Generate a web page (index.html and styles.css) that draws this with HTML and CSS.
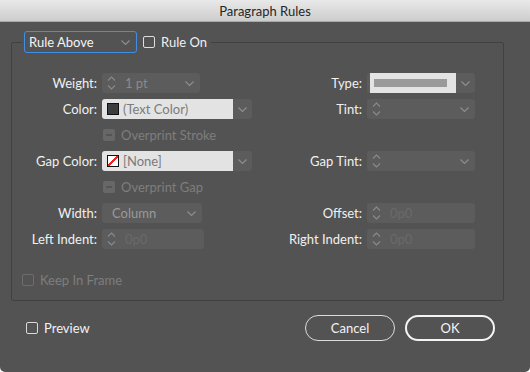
FILE: index.html
```html
<!DOCTYPE html>
<html lang="en">
<head>
  <meta charset="UTF-8">
  <title>Paragraph Rules</title>
  <link rel="stylesheet" href="styles.css">
</head>
<body>
<div class="window">
  <div class="titlebar">Paragraph Rules</div>

  <fieldset class="group">
    <legend class="legend">
      <div class="select focus">
        <span>Rule Above</span>
        <svg class="chev" width="9" height="5" viewBox="0 0 9 5"><path d="M0.5 0.5 L4.5 4.5 L8.5 0.5"/></svg>
      </div>
      <span class="check"></span>
      <span class="label-on">Rule On</span>
    </legend>

    <div class="grid">
      <!-- row 1 -->
      <label class="lbl">Weight:</label>
      <div class="field w98">
        <svg class="spin" width="9" height="16" viewBox="0 0 9 16"><path d="M1 5.5 L4.5 2 L8 5.5 M1 10.5 L4.5 14 L8 10.5"/></svg>
        <span class="val">1 pt</span>
        <svg class="chev" width="9" height="5" viewBox="0 0 9 5"><path d="M0.5 0.5 L4.5 4.5 L8.5 0.5"/></svg>
      </div>
      <label class="lbl">Type:</label>
      <div class="field w108 split">
        <div class="light type"><span class="stroke"></span></div>
        <svg class="chev" width="9" height="5" viewBox="0 0 9 5"><path d="M0.5 0.5 L4.5 4.5 L8.5 0.5"/></svg>
      </div>

      <!-- row 2 -->
      <label class="lbl">Color:</label>
      <div class="field w150 split">
        <div class="light"><span class="swatch dark"></span><span class="val">(Text Color)</span></div>
        <svg class="chev" width="9" height="5" viewBox="0 0 9 5"><path d="M0.5 0.5 L4.5 4.5 L8.5 0.5"/></svg>
      </div>
      <label class="lbl">Tint:</label>
      <div class="field w108">
        <svg class="spin" width="9" height="16" viewBox="0 0 9 16"><path d="M1 5.5 L4.5 2 L8 5.5 M1 10.5 L4.5 14 L8 10.5"/></svg>
        <span class="val"></span>
        <svg class="chev" width="9" height="5" viewBox="0 0 9 5"><path d="M0.5 0.5 L4.5 4.5 L8.5 0.5"/></svg>
      </div>

      <!-- row 3 -->
      <span></span>
      <div class="opt"><span class="check mixed"></span><span>Overprint Stroke</span></div>
      <span></span><span></span>

      <!-- row 4 -->
      <label class="lbl">Gap Color:</label>
      <div class="field w150 split">
        <div class="light"><span class="swatch none"></span><span class="val">[None]</span></div>
        <svg class="chev" width="9" height="5" viewBox="0 0 9 5"><path d="M0.5 0.5 L4.5 4.5 L8.5 0.5"/></svg>
      </div>
      <label class="lbl">Gap Tint:</label>
      <div class="field w108">
        <svg class="spin" width="9" height="16" viewBox="0 0 9 16"><path d="M1 5.5 L4.5 2 L8 5.5 M1 10.5 L4.5 14 L8 10.5"/></svg>
        <span class="val"></span>
        <svg class="chev" width="9" height="5" viewBox="0 0 9 5"><path d="M0.5 0.5 L4.5 4.5 L8.5 0.5"/></svg>
      </div>

      <!-- row 5 -->
      <span></span>
      <div class="opt"><span class="check mixed"></span><span>Overprint Gap</span></div>
      <span></span><span></span>

      <!-- row 6 -->
      <label class="lbl">Width:</label>
      <div class="field w100">
        <span class="val plain">Column</span>
        <svg class="chev" width="9" height="5" viewBox="0 0 9 5"><path d="M0.5 0.5 L4.5 4.5 L8.5 0.5"/></svg>
      </div>
      <label class="lbl">Offset:</label>
      <div class="field w108">
        <svg class="spin" width="9" height="16" viewBox="0 0 9 16"><path d="M1 5.5 L4.5 2 L8 5.5 M1 10.5 L4.5 14 L8 10.5"/></svg>
        <span class="val faint">0p0</span>
      </div>

      <!-- row 7 -->
      <label class="lbl">Left Indent:</label>
      <div class="field w102">
        <svg class="spin" width="9" height="16" viewBox="0 0 9 16"><path d="M1 5.5 L4.5 2 L8 5.5 M1 10.5 L4.5 14 L8 10.5"/></svg>
        <span class="val faint">0p0</span>
      </div>
      <label class="lbl">Right Indent:</label>
      <div class="field w108">
        <svg class="spin" width="9" height="16" viewBox="0 0 9 16"><path d="M1 5.5 L4.5 2 L8 5.5 M1 10.5 L4.5 14 L8 10.5"/></svg>
        <span class="val faint">0p0</span>
      </div>
    </div>

    <div class="opt keep"><span class="check off"></span><span>Keep In Frame</span></div>
  </fieldset>

  <div class="footer">
    <div class="opt preview"><span class="check"></span><span>Preview</span></div>
    <div class="buttons">
      <button class="btn">Cancel</button>
      <button class="btn default">OK</button>
    </div>
  </div>
</div>
</body>
</html>
```

FILE: styles.css
```css
* { margin:0; padding:0; box-sizing:border-box; }
html, body { width:100%; height:100%; background:#fff; }
body { font-family:Lato, "Open Sans", sans-serif; font-size:13px; color:#f0f0f0; }

.window {
  width:530px;
  height:372px;
  background:#535353;
  border-radius:0 0 5px 5px;
  overflow:hidden;
}
.titlebar {
  height:22px;
  line-height:22px;
  text-align:center;
  color:#262626;
  background:linear-gradient(#e9e9e9, #cdcdcd);
  border-bottom:1px solid #a9a9a9;
}

/* group box */
.group {
  margin:9px 26px 0 11px;
  padding:20px 0 13px 0;
  border:1px solid #414141;
  border-radius:2px;
}
.legend {
  display:flex;
  align-items:center;
  margin-left:10px;
  padding:0 4px 0 2px;
}
.select {
  display:flex;
  align-items:center;
  justify-content:space-between;
  width:113px;
  height:22px;
  padding:0 6px 0 4px;
  border:1px solid #3f8fe6;
  border-radius:3px;
  color:#f4f4f4;
}
.check {
  display:inline-block;
  width:12px;
  height:12px;
  border:1px solid #dedede;
  border-radius:2px;
  flex:none;
}
.legend .check { margin:0 6px; }

.chev { fill:none; stroke:#8f8f8f; stroke-width:1.1; flex:none; }
.spin { fill:none; stroke:#8a8a8a; stroke-width:1.1; flex:none; }

/* form grid */
.grid {
  display:grid;
  grid-template-columns:85px 150px 105px 108px;
  grid-auto-rows:20px;
  column-gap:5px;
  row-gap:6px;
}
.lbl { text-align:right; line-height:20px; white-space:nowrap; }
.field {
  display:flex;
  align-items:center;
  height:20px;
  padding:0 6px 0 5px;
  background:#5c5c5c;
  border-radius:3px;
}
.w98 { width:98px; }
.w100 { width:100px; }
.w102 { width:102px; }
.w108 { width:108px; }
.w150 { width:150px; }
.field .val { flex:1; color:#8a8a8a; padding-left:9px; }
.field .val.plain { padding-left:5px; color:#9a9a9a; }
.field .val.faint { color:#6a6a6a; }
.field.split { padding:0 5px 0 0; }
.field.split .chev { margin-left:auto; }
.light {
  display:flex;
  align-items:center;
  width:131px;
  height:20px;
  padding-left:5px;
  background:#e3e3e3;
  border-radius:3px 0 0 3px;
}
.light .val { padding-left:4px; color:#7b7b7b; }
.light.type { width:86px; margin-left:3px; border-radius:0; padding-left:4px; }
.stroke { width:73px; height:8px; background:#9a9a9a; }
.swatch { width:12px; height:12px; flex:none; border:1px solid #111; }
.swatch.dark { background:#3d3d3d; }
.swatch.none {
  background:linear-gradient(to bottom right, #fff 42%, #e22 42%, #e22 60%, #fff 60%);
}

.opt { display:flex; align-items:center; gap:6px; color:#7e7e7e; padding-left:1px; }
.check.mixed { border:none; background:#676767; position:relative; }
.check.mixed::after {
  content:"";
  position:absolute;
  left:3px; top:5px;
  width:6px; height:2px;
  background:#555;
}
.check.off { border-color:#6c6c6c; }
.keep { margin:24px 0 0 9px; line-height:14px; }

/* footer */
.footer {
  display:flex;
  align-items:center;
  justify-content:space-between;
  margin-top:14px;
  padding:0 35px 0 26px;
}
.preview { color:#f2f2f2; padding-left:0; }
.preview .check { border-color:#d9d9d9; }
.buttons { display:flex; gap:10px; }
.btn {
  width:90px;
  height:26px;
  border:1px solid #dcdcdc;
  border-radius:13px;
  background:transparent;
  color:#f4f4f4;
  font:inherit;
  font-size:13px;
}
.btn.default { border:2px solid #f4f4f4; }
```
